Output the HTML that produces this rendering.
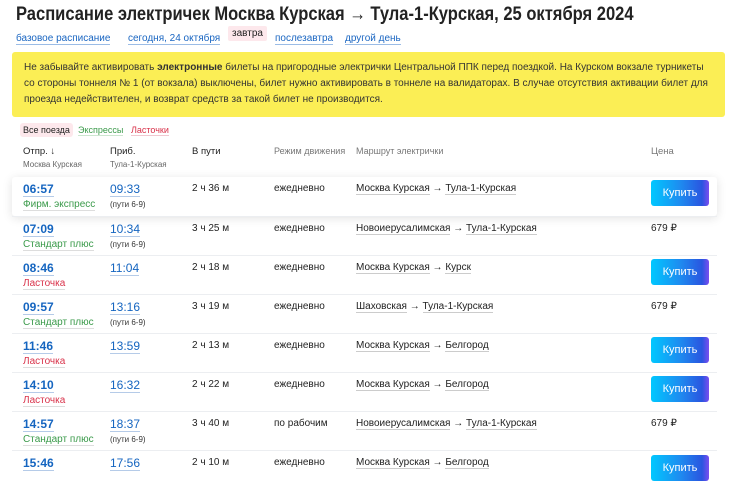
<!DOCTYPE html><html><head><meta charset="utf-8"><style>
*{margin:0;padding:0;box-sizing:border-box}
body{width:730px;height:473px;overflow:hidden;background:#fff;font-family:"Liberation Sans",sans-serif;color:#222;position:relative}
.a{position:absolute;white-space:nowrap}
h1{position:absolute;left:16px;top:4px;font-size:19px;font-weight:bold;color:#222;white-space:nowrap;transform:scaleX(0.87);transform-origin:left top}
.lk{color:#1a66c2;border-bottom:1px solid #9bbce6;font-size:10px}
.y{position:absolute;left:12px;top:52px;width:713px;height:65px;background:#fbee55;border-radius:3px;padding:8px 12px;font-size:10px;line-height:16px;color:#333}
.row{position:absolute;left:12px;width:705px;height:39px;border-top:1px solid #eceef1}
.card{background:#fff;border-top:none;box-shadow:0 2px 10px rgba(0,0,0,.12);border-radius:3px}
.t{position:absolute;top:5px;font-size:12px;font-weight:bold;color:#1565c0;border-bottom:1px solid #b5cbe8;line-height:14px}
.t2{position:absolute;top:5px;font-size:12px;color:#1565c0;border-bottom:1px solid #b5cbe8;line-height:14px}
.c{position:absolute;top:6px;font-size:10px;color:#222}
.s{position:absolute;top:22px;font-size:10px;border-bottom:1px solid #ddd}
.p{position:absolute;top:23px;font-size:8px;color:#333;left:98px}
.r{position:absolute;left:344px;top:6px;font-size:10px;color:#222}
.r span{border-bottom:1px solid #ccc}
.b{position:absolute;left:639px;top:3px;width:58px;height:26px;border-radius:3px;background:linear-gradient(90deg,#00c8ff 0%,#1e8cf0 50%,#2a55e0 88%,#7a4ef0 100%);color:#fff;font-size:11px;text-align:center;line-height:26px}
.pr{position:absolute;left:639px;top:6px;font-size:10px}
.g{color:#3a9a4a}.rd{color:#d9324a}
.h{position:absolute;top:146px;font-size:9.5px;color:#222;white-space:nowrap}
.hs{position:absolute;top:160px;font-size:8px;color:#666;white-space:nowrap}
</style></head><body>
<h1>Расписание электричек Москва Курская → Тула-1-Курская, 25 октября 2024</h1>
<div class="a" style="left:16px;top:28px"><span class="lk">базовое расписание</span></div>
<div class="a" style="left:128px;top:28px"><span class="lk">сегодня, 24 октября</span></div>
<div class="a" style="left:228px;top:26px;background:#fde8ec;padding:2px 4px;font-size:10px;border-radius:2px">завтра</div>
<div class="a" style="left:275px;top:28px"><span class="lk">послезавтра</span></div>
<div class="a" style="left:345px;top:28px"><span class="lk">другой день</span></div>
<div class="y">Не забывайте активировать <b>электронные</b> билеты на пригородные электрички Центральной ППК перед поездкой. На Курском вокзале турникеты со стороны тоннеля № 1 (от вокзала) выключены, билет нужно активировать в тоннеле на валидаторах. В случае отсутствия активации билет для проезда недействителен, и возврат средств за такой билет не производится.</div>
<div class="a" style="left:20px;top:123px;background:#fde8ec;padding:2px 3px;font-size:9px;border-radius:3px">Все поезда</div>
<div class="a g" style="left:78px;top:125px;font-size:9px;border-bottom:1px solid #cde6d0">Экспрессы</div>
<div class="a rd" style="left:131px;top:125px;font-size:9px;border-bottom:1px solid #f0c8d0">Ласточки</div>
<div class="h rd" style="left:23px">Отпр. ↓</div><div class="hs" style="left:23px">Москва Курская</div>
<div class="h" style="left:110px">Приб.</div><div class="hs" style="left:110px">Тула-1-Курская</div>
<div class="h" style="left:192px">В пути</div>
<div class="h" style="left:274px;color:#777;font-size:9px">Режим движения</div>
<div class="h" style="left:356px;color:#777;font-size:9px">Маршрут электрички</div>
<div class="h" style="left:651px;color:#777">Цена</div>

<div class="row card" style="top:177px"><span class="t" style="left:11px">06:57</span><span class="t2" style="left:98px">09:33</span><span class="c" style="left:180px">2 ч 36 м</span><span class="c" style="left:262px">ежедневно</span><span class="s g" style="left:11px">Фирм. экспресс</span><span class="p">(пути 6-9)</span><span class="r"><span>Москва Курская</span> → <span>Тула-1-Курская</span></span><span class="b">Купить</span></div>
<div class="row" style="top:216px"><span class="t" style="left:11px">07:09</span><span class="t2" style="left:98px">10:34</span><span class="c" style="left:180px">3 ч 25 м</span><span class="c" style="left:262px">ежедневно</span><span class="s g" style="left:11px">Стандарт плюс</span><span class="p">(пути 6-9)</span><span class="r"><span>Новоиерусалимская</span> → <span>Тула-1-Курская</span></span><span class="pr">679 ₽</span></div>
<div class="row" style="top:255px"><span class="t" style="left:11px">08:46</span><span class="t2" style="left:98px">11:04</span><span class="c" style="left:180px">2 ч 18 м</span><span class="c" style="left:262px">ежедневно</span><span class="s rd" style="left:11px">Ласточка</span><span class="r"><span>Москва Курская</span> → <span>Курск</span></span><span class="b">Купить</span></div>
<div class="row" style="top:294px"><span class="t" style="left:11px">09:57</span><span class="t2" style="left:98px">13:16</span><span class="c" style="left:180px">3 ч 19 м</span><span class="c" style="left:262px">ежедневно</span><span class="s g" style="left:11px">Стандарт плюс</span><span class="p">(пути 6-9)</span><span class="r"><span>Шаховская</span> → <span>Тула-1-Курская</span></span><span class="pr">679 ₽</span></div>
<div class="row" style="top:333px"><span class="t" style="left:11px">11:46</span><span class="t2" style="left:98px">13:59</span><span class="c" style="left:180px">2 ч 13 м</span><span class="c" style="left:262px">ежедневно</span><span class="s rd" style="left:11px">Ласточка</span><span class="r"><span>Москва Курская</span> → <span>Белгород</span></span><span class="b">Купить</span></div>
<div class="row" style="top:372px"><span class="t" style="left:11px">14:10</span><span class="t2" style="left:98px">16:32</span><span class="c" style="left:180px">2 ч 22 м</span><span class="c" style="left:262px">ежедневно</span><span class="s rd" style="left:11px">Ласточка</span><span class="r"><span>Москва Курская</span> → <span>Белгород</span></span><span class="b">Купить</span></div>
<div class="row" style="top:411px"><span class="t" style="left:11px">14:57</span><span class="t2" style="left:98px">18:37</span><span class="c" style="left:180px">3 ч 40 м</span><span class="c" style="left:262px">по рабочим</span><span class="s g" style="left:11px">Стандарт плюс</span><span class="p">(пути 6-9)</span><span class="r"><span>Новоиерусалимская</span> → <span>Тула-1-Курская</span></span><span class="pr">679 ₽</span></div>
<div class="row" style="top:450px"><span class="t" style="left:11px">15:46</span><span class="t2" style="left:98px">17:56</span><span class="c" style="left:180px">2 ч 10 м</span><span class="c" style="left:262px">ежедневно</span><span class="r"><span>Москва Курская</span> → <span>Белгород</span></span><span class="b" style="top:4px">Купить</span></div>
</body></html>
